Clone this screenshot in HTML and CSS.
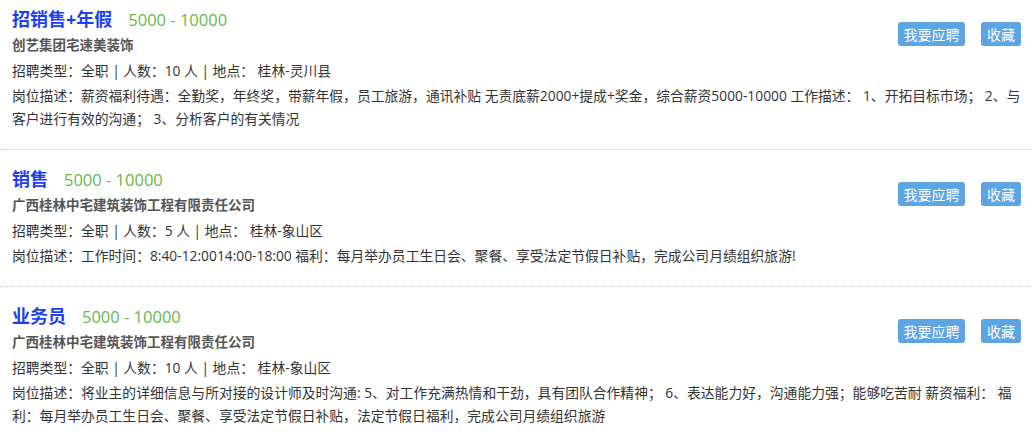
FILE: index.html
```html
<!DOCTYPE html>
<html lang="zh-CN">
<head>
    <meta charset="UTF-8">
    <meta name="viewport" content="width=device-width, initial-scale=1.0">
    <title>职位列表</title>
    <link rel="stylesheet" href="styles.css">
</head>
<body>

    <!-- Job list -->
    <div class="job-list">

        <div class="job-item">
            <div class="job-actions">
                <button class="btn btn-apply">我要应聘</button>
                <button class="btn btn-fav">收藏</button>
            </div>
            <h3 class="job-title">招销售+年假<span class="salary">5000 - 10000</span></h3>
            <p class="company">创艺集团宅速美装饰</p>
            <p class="meta">招聘类型：全职 | 人数：10 人 | 地点： 桂林-灵川县</p>
            <p class="desc">岗位描述：薪资福利待遇：全勤奖，年终奖，带薪年假，员工旅游，通讯补贴 无责底薪2000+提成+奖金，综合薪资5000-10000 工作描述： 1、开拓目标市场； 2、与客户进行有效的沟通； 3、分析客户的有关情况</p>
        </div>

        <div class="job-item">
            <div class="job-actions">
                <button class="btn btn-apply">我要应聘</button>
                <button class="btn btn-fav">收藏</button>
            </div>
            <h3 class="job-title">销售<span class="salary">5000 - 10000</span></h3>
            <p class="company">广西桂林中宅建筑装饰工程有限责任公司</p>
            <p class="meta">招聘类型：全职 | 人数：5 人 | 地点： 桂林-象山区</p>
            <p class="desc">岗位描述：工作时间：8:40-12:0014:00-18:00 福利：每月举办员工生日会、聚餐、享受法定节假日补贴，完成公司月绩组织旅游!</p>
        </div>

        <div class="job-item">
            <div class="job-actions">
                <button class="btn btn-apply">我要应聘</button>
                <button class="btn btn-fav">收藏</button>
            </div>
            <h3 class="job-title">业务员<span class="salary">5000 - 10000</span></h3>
            <p class="company">广西桂林中宅建筑装饰工程有限责任公司</p>
            <p class="meta">招聘类型：全职 | 人数：10 人 | 地点： 桂林-象山区</p>
            <p class="desc">岗位描述：将业主的详细信息与所对接的设计师及时沟通: 5、对工作充满热情和干劲，具有团队合作精神； 6、表达能力好，沟通能力强；能够吃苦耐 薪资福利： 福利：每月举办员工生日会、聚餐、享受法定节假日补贴，法定节假日福利，完成公司月绩组织旅游</p>
        </div>

    </div>

</body>
</html>
```

FILE: styles.css
```css
body {
    font-family: "Open Sans", "Noto Sans CJK SC", sans-serif;
    background-color: #fff;
    color: #333;
    margin: 0;
    padding: 0;
}

.job-item {
    padding: 16px 11px 19px 12px;
    border-bottom: 1px dotted #c8c8c8;
}

.job-item:first-child {
    padding-top: 6px;
}

.job-item:last-child {
    border-bottom: none;
}

.job-actions {
    float: right;
    margin-top: 16px;
    display: flex;
    gap: 16px;
}

.btn {
    height: 24px;
    padding: 0;
    font-family: "Noto Sans CJK SC", sans-serif;
    font-size: 14px;
    line-height: 24px;
    text-align: center;
    background-color: #5ca5e2;
    border: none;
    color: white;
    border-radius: 3px;
    cursor: pointer;
}

.btn-apply {
    width: 67px;
}

.btn-fav {
    width: 40px;
}

.btn:hover {
    background-color: #4b94d1;
}

.job-title {
    margin: 0;
    font-size: 18px;
    line-height: 26px;
    font-weight: bold;
    color: #1d3ff2;
}

.salary {
    margin-left: 16px;
    font-size: 16.5px;
    font-weight: normal;
    color: #66b848;
}

.company {
    margin: 0;
    font-size: 13.5px;
    line-height: 25px;
    font-weight: bold;
    color: #555;
}

.meta {
    margin: 0;
    font-size: 13.8px;
    line-height: 25px;
}

.desc {
    margin: 1px 0 0;
    font-size: 13.8px;
    line-height: 23px;
}
```
